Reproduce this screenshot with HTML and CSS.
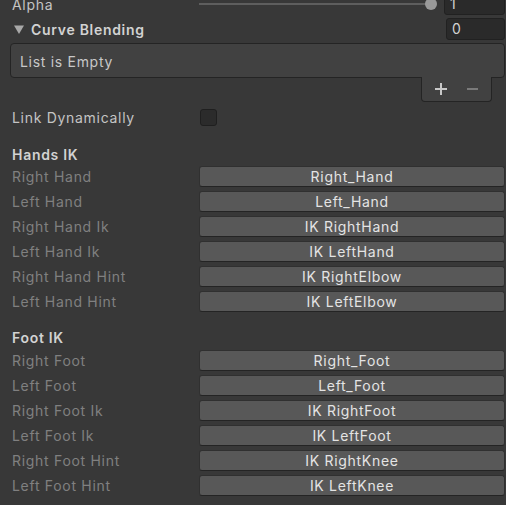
FILE: index.html
```html
<!DOCTYPE html>
<html lang="en">
<head>
	<meta charset="UTF-8">
	<title>IK Inspector</title>
	<link rel="stylesheet" href="styles.css">
</head>
<body>
	<div class="inspector">
		<div class="row top-row">
			<span class="label bright">Alpha</span>
			<div class="slider">
				<div class="track"></div>
				<div class="knob"></div>
			</div>
			<div class="num-field">1</div>
		</div>
		<div class="row foldout-row">
			<span class="foldout">
				<svg width="10" height="9" viewBox="0 0 10 9"><polygon points="0,0.5 10,0.5 5,9" fill="#a8a8a8"/></svg>
				Curve Blending
			</span>
			<div class="num-field small">0</div>
		</div>
		<div class="rlist">
			<div class="rlist-body">List is Empty</div>
			<div class="rlist-footer">
				<svg class="plus" width="12" height="12" viewBox="0 0 12 12"><rect x="5" y="0" width="2" height="12" fill="#c8c8c8"/><rect x="0" y="5" width="12" height="2" fill="#c8c8c8"/></svg>
				<svg class="minus" width="11" height="12" viewBox="0 0 11 12"><rect x="0" y="5" width="11" height="2" fill="#7a7a7a"/></svg>
			</div>
		</div>
		<div class="row link-row">
			<span class="label bright">Link Dynamically</span>
			<div class="checkbox"></div>
		</div>

		<div class="section">
			<h3>Hands IK</h3>
			<div class="fields">
				<div class="field"><span class="label">Right Hand</span><div class="btn">Right_Hand</div></div>
				<div class="field"><span class="label">Left Hand</span><div class="btn">Left_Hand</div></div>
				<div class="field"><span class="label">Right Hand Ik</span><div class="btn">IK RightHand</div></div>
				<div class="field"><span class="label">Left Hand Ik</span><div class="btn">IK LeftHand</div></div>
				<div class="field"><span class="label">Right Hand Hint</span><div class="btn">IK RightElbow</div></div>
				<div class="field"><span class="label">Left Hand Hint</span><div class="btn">IK LeftElbow</div></div>
			</div>
		</div>

		<div class="section foot">
			<h3>Foot IK</h3>
			<div class="fields">
				<div class="field"><span class="label">Right Foot</span><div class="btn">Right_Foot</div></div>
				<div class="field"><span class="label">Left Foot</span><div class="btn">Left_Foot</div></div>
				<div class="field"><span class="label">Right Foot Ik</span><div class="btn">IK RightFoot</div></div>
				<div class="field"><span class="label">Left Foot Ik</span><div class="btn">IK LeftFoot</div></div>
				<div class="field"><span class="label">Right Foot Hint</span><div class="btn">IK RightKnee</div></div>
				<div class="field"><span class="label">Left Foot Hint</span><div class="btn">IK LeftKnee</div></div>
			</div>
		</div>
	</div>
</body>
</html>
```

FILE: styles.css
```css
*{margin: 0;padding: 0;box-sizing: border-box;}
html,body{
	background: #383838;
	overflow: hidden;
}
body{
	font-family: Inter, "Noto Sans", sans-serif;
	font-size: 14px;
	letter-spacing: 0.7px;
	color: #c4c4c4;
}
.inspector{
	padding: 0 1px 0 10px;
	margin-top: -7px;
}
.row{
	display: flex;
	align-items: center;
	height: 22px;
}
.label{
	flex: 0 0 189px;
	padding-left: 2px;
	color: #808080;
	white-space: nowrap;
}
.label.bright{
	color: #c4c4c4;
}
.slider{
	flex: 1;
	display: flex;
	align-items: center;
	height: 22px;
	margin-right: 7px;
}
.slider .track{
	flex: 1;
	height: 2px;
	background: #5e5e5e;
}
.slider .knob{
	width: 12px;
	height: 12px;
	border-radius: 50%;
	background: #999;
	margin-left: -6px;
}
.num-field{
	width: 61px;
	height: 22px;
	background: #2a2a2a;
	border: 1px solid #212121;
	border-radius: 3px;
	color: #d2d2d2;
	padding-left: 5px;
	line-height: 20px;
}
.num-field.small{
	width: 59px;
}
.foldout-row{
	margin-top: 3px;
	justify-content: space-between;
}
.foldout{
	display: flex;
	align-items: center;
	gap: 7px;
	padding-left: 4px;
	font-weight: 600;
	color: #d2d2d2;
}
.rlist{
	margin-top: 3px;
	display: flex;
	flex-direction: column;
	align-items: flex-end;
}
.rlist-body{
	width: 100%;
	height: 35px;
	background: #414141;
	border: 1px solid #242424;
	border-radius: 4px;
	padding: 1px 0 0 9px;
	line-height: 33px;
	color: #c8c8c8;
}
.rlist-footer{
	width: 71px;
	height: 25px;
	margin: -1px 13px 0 0;
	background: #414141;
	border: 1px solid #242424;
	border-top: none;
	border-radius: 0 0 4px 4px;
	display: flex;
	align-items: center;
	padding-left: 13px;
}
.rlist-footer .minus{
	margin-left: 20px;
}
.link-row{
	margin-top: 5px;
	height: 21px;
}
.checkbox{
	width: 17px;
	height: 17px;
	margin-left: 1px;
	background: #2b2b2b;
	border: 1px solid #1f1f1f;
	border-radius: 3px;
}
.section{
	margin-top: 16px;
}
.section.foot{
	margin-top: 15px;
}
.section h3{
	height: 21px;
	line-height: 21px;
	padding-left: 2px;
	font-size: 14px;
	font-weight: 600;
	color: #d2d2d2;
	margin-bottom: 1px;
}
.section.foot h3{
	margin-bottom: 2px;
}
.fields{
	display: flex;
	flex-direction: column;
	gap: 4px;
}
.field{
	display: flex;
	align-items: center;
	height: 21px;
}
.btn{
	flex: 1;
	height: 21px;
	background: #585858;
	border: 1px solid #303030;
	border-bottom-color: #242424;
	border-radius: 3px;
	text-align: center;
	line-height: 19px;
	color: #e4e4e4;
}
```
